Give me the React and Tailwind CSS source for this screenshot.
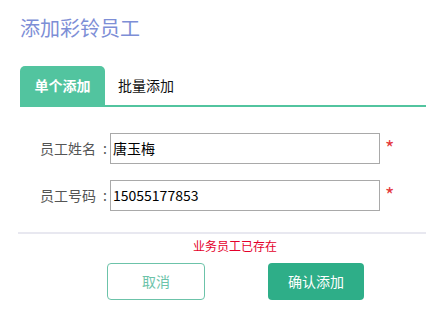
import React from "react";

const font = { fontFamily: '"Noto Sans CJK SC", "Noto Sans", sans-serif' };

function Row({ label, value, top }) {
  return (
    <div className={`${top} flex items-center h-[31px]`}>
      <div className="w-[110px] pl-[40px] flex items-center text-[14px] text-[#555]">
        <span>{label}</span>
        <span className="ml-[7px]">:</span>
      </div>
      <div className="w-[270px] h-[31px] border border-[#a9a9a9] pl-[2px] flex items-center text-[14px] text-black">
        {value}
      </div>
      <div className="ml-[5px] text-[#e4393c] text-[20px] leading-none self-start mt-[5px]">*</div>
    </div>
  );
}

export default function App() {
  return (
    <div
      className="w-[426px] h-[309px] bg-white overflow-hidden relative"
      style={font}
    >
      <div className="pt-[16px] pl-[20px] h-[40px] text-[20px] leading-[24px] text-[#7d8ed6]">
        添加彩铃员工
      </div>

      <div className="mt-[26px] ml-[20px] flex items-end border-b-2 border-[#52c49f] h-[41px]">
        <div className="w-[85px] h-[39px] rounded-t-[5px] bg-[#52c49f] text-white font-bold text-[14px] flex items-center justify-center">
          单个添加
        </div>
        <div className="h-[39px] pl-[13px] text-[14px] font-normal text-[#111] flex items-center">
          批量添加
        </div>
      </div>

      <Row top="mt-[26px]" label="员工姓名" value="唐玉梅" />
      <Row top="mt-[16px]" label="员工号码" value="15055177853" />

      <div className="mt-[21px] ml-[18px] h-[2px] bg-[#e8e8f0]"></div>

      <div className="mt-[3px] h-[18px] text-center pl-[44px] text-[12px] leading-[18px] text-[#e4002b]">
        业务员工已存在
      </div>

      <div className="mt-[8px] flex">
        <div className="ml-[107px] w-[98px] h-[37px] border border-[#6cc3a9] rounded-[4px] flex items-center justify-center text-[14px] text-[#6cc3a9]">
          取消
        </div>
        <div className="ml-[63px] w-[96px] h-[37px] bg-[#2eae88] rounded-[4px] flex items-center justify-center text-[14px] text-white">
          确认添加
        </div>
      </div>
    </div>
  );
}
